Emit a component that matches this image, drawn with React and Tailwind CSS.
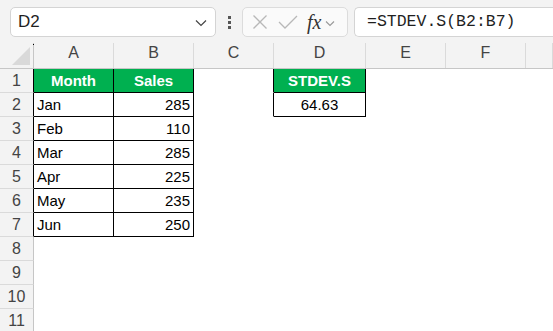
import React from "react";

const COLS = [
  { key: "A", w: "w-[80px]" },
  { key: "B", w: "w-[80px]" },
  { key: "C", w: "w-[80px]" },
  { key: "D", w: "w-[92px]" },
  { key: "E", w: "w-[80px]" },
  { key: "F", w: "w-[80px]" },
  { key: "G", w: "flex-1", noLabel: true },
];

const data = {
  1: { A: { t: "Month", h: true }, B: { t: "Sales", h: true }, D: { t: "STDEV.S", h: true } },
  2: { A: { t: "Jan" }, B: { t: "285", r: true }, D: { t: "64.63", c: true } },
  3: { A: { t: "Feb" }, B: { t: "110", r: true } },
  4: { A: { t: "Mar" }, B: { t: "285", r: true } },
  5: { A: { t: "Apr" }, B: { t: "225", r: true } },
  6: { A: { t: "May" }, B: { t: "235", r: true } },
  7: { A: { t: "Jun" }, B: { t: "250", r: true } },
};

function bordered(row, col) {
  const d = data[row];
  return !!(d && d[col]);
}

function Cell({ row, col, w }) {
  const d = data[row] && data[row][col];
  const idx = COLS.findIndex((c) => c.key === col);
  const next = COLS[idx + 1];
  const rightBlack = bordered(row, col) || (next && bordered(row, next.key));
  const bottomBlack = bordered(row, col) || bordered(row + 1, col);
  const cls = [
    w,
    "shrink-0 h-[24px] border-r border-b flex items-center px-[3px] text-[15px] leading-none",
    rightBlack ? "border-r-black" : "border-r-white",
    bottomBlack ? "border-b-black" : "border-b-white",
  ];
  if (d && d.h) cls.push("bg-[#00b050] text-white font-bold justify-center");
  else if (d && d.r) cls.push("bg-white text-black justify-end");
  else if (d && d.c) cls.push("bg-white text-black justify-center");
  else cls.push("bg-white text-black");
  return <div className={cls.join(" ")}>{d ? d.t : ""}</div>;
}

export default function App() {
  const rows = [1, 2, 3, 4, 5, 6, 7, 8, 9, 10, 11];
  return (
    <div
      className="w-[553px] h-[331px] overflow-hidden bg-white relative"
      style={{ fontFamily: '"Liberation Sans", Arial, sans-serif' }}
    >
      {/* Toolbar */}
      <div className="h-[43px] bg-[#f3f3f3] flex items-start pt-[7px] pl-[10px]">
        <div className="w-[206px] h-[30px] bg-white border border-[#d4d4d4] rounded-[5px] flex items-center pl-[7px] pr-[8px] justify-between">
          <span className="text-[17px] text-[#1f1f1f]">D2</span>
          <svg width="12" height="8" viewBox="0 0 12 8" className="mt-[2px]">
            <path d="M1 1.5 L6 6.5 L11 1.5" fill="none" stroke="#444" strokeWidth="1.2" />
          </svg>
        </div>
        <div className="w-[26px] h-[30px] flex flex-col items-center justify-center gap-[2px]">
          <div className="w-[3px] h-[3px] bg-[#555]" />
          <div className="w-[3px] h-[3px] bg-[#555]" />
          <div className="w-[3px] h-[3px] bg-[#555]" />
        </div>
        <div className="w-[106px] h-[30px] bg-[#fafafa] border border-[#dcdcdc] rounded-[5px] flex items-center">
          <svg width="16" height="16" viewBox="0 0 16 16" className="ml-[9px]">
            <path d="M1.5 1.5 L14.5 14.5 M14.5 1.5 L1.5 14.5" stroke="#b8b8b8" strokeWidth="1.3" fill="none" />
          </svg>
          <svg width="20" height="14" viewBox="0 0 20 14" className="ml-[10px]">
            <path d="M1 7 L7 13 L19 1" stroke="#b8b8b8" strokeWidth="1.3" fill="none" />
          </svg>
          <span
            className="ml-[9px] text-[20px] italic text-[#333] leading-none"
            style={{ fontFamily: '"Liberation Serif", "Times New Roman", serif' }}
          >
            fx
          </span>
          <svg width="10" height="7" viewBox="0 0 10 7" className="ml-[4px] mt-[2px]">
            <path d="M1 1.5 L5 5.5 L9 1.5" fill="none" stroke="#999" strokeWidth="1.1" />
          </svg>
        </div>
        <div className="ml-[6px] flex-1 h-[30px] bg-white border border-r-0 border-[#d4d4d4] rounded-l-[5px] flex items-center pl-[12px]">
          <span
            className="text-[16.5px] text-[#1f1f1f] leading-none"
            style={{ fontFamily: '"Liberation Mono", "Courier New", monospace' }}
          >
            =STDEV.S(B2:B7)
          </span>
        </div>
      </div>

      {/* Column header */}
      <div className="flex h-[26px] bg-[#f3f3f3] border-b border-[#c6c6c6]">
        <div className="w-[34px] shrink-0 border-r border-[#c6c6c6] relative">
          <div className="absolute right-[3px] bottom-[3px] w-0 h-0 border-l-[18px] border-l-transparent border-b-[18px] border-b-[#d9d9d9]" />
          <div className="absolute right-[-1px] top-[1px] w-[1px] h-[1px] bg-black" />
        </div>
        {COLS.map((c) => (
          <div
            key={c.key}
            className={`${c.w} shrink-0 border-r border-[#dadada] flex items-end justify-center pb-[3px] text-[16px] text-[#444]`}
          >
            {c.noLabel ? "" : c.key}
          </div>
        ))}
      </div>

      {/* Rows */}
      {rows.map((r) => (
        <div key={r} className="flex">
          <div
            className={`w-[34px] shrink-0 h-[24px] bg-[#f3f3f3] border-r border-b border-b-[#dadada] flex items-center justify-center text-[16px] text-[#444] ${
              bordered(r, "A") ? "border-r-black" : "border-r-[#c6c6c6]"
            }`}
          >
            {r}
          </div>
          {COLS.map((c) => (
            <Cell key={c.key} row={r} col={c.key} w={c.w} />
          ))}
        </div>
      ))}
    </div>
  );
}
